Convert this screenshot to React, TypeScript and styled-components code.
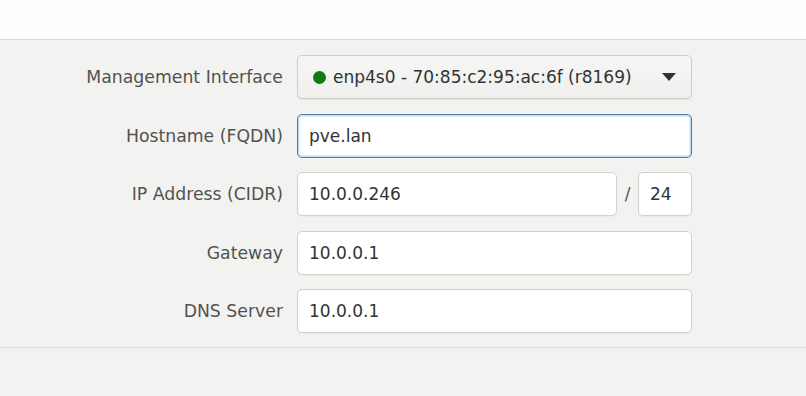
import React from "react";
import styled, { createGlobalStyle } from "styled-components";

const GlobalStyle = createGlobalStyle`
  html, body {
    margin: 0;
    padding: 0;
    background: #f2f2f0;
  }
  body {
    font-family: "DejaVu Sans", "Liberation Sans", sans-serif;
  }
`;

const Page = styled.div`
  width: 806px;
  height: 396px;
  display: flex;
  flex-direction: column;
  overflow: hidden;
  background: #f2f2f0;
`;

const TopBar = styled.div`
  height: 39px;
  flex-shrink: 0;
  background: #fdfdfc;
  border-bottom: 1px solid #dcdcd9;
`;

const Form = styled.div`
  display: grid;
  grid-template-columns: 283px 395px;
  column-gap: 14px;
  row-gap: 14.5px;
  align-items: center;
  padding: 15px 0 14px;
  border-bottom: 1px solid #dcdcd9;
`;

const Label = styled.label`
  justify-self: end;
  font-size: 17.3px;
  color: #525252;
  white-space: nowrap;
`;

const Field = styled.div<{ $focused?: boolean }>`
  height: 44px;
  box-sizing: border-box;
  display: flex;
  align-items: center;
  padding: 0 11px;
  background: #ffffff;
  border: 1px solid ${(p) => (p.$focused ? "#4a7cb3" : "#d3cfcb")};
  border-radius: 5px;
  box-shadow: ${(p) =>
    p.$focused ? "inset 0 0 0 1.5px #bfe0f6" : "0 1px 0 rgba(0,0,0,0.03)"};
  font-size: 17px;
  color: #2e3436;
`;

const Select = styled.div`
  height: 44px;
  box-sizing: border-box;
  display: flex;
  align-items: center;
  gap: 7px;
  padding: 0 14px 0 15px;
  background: linear-gradient(#f6f6f4, #efefed);
  border: 1px solid #d0ccc8;
  border-radius: 5px;
  box-shadow: 0 1px 1px rgba(0, 0, 0, 0.06);
  font-size: 17px;
  color: #2e3436;
`;

const Dot = styled.span`
  width: 13px;
  height: 13px;
  border-radius: 50%;
  background: #137a13;
  flex-shrink: 0;
`;

const SelectText = styled.span`
  flex: 1;
  white-space: nowrap;
`;

const Arrow = styled.span`
  width: 0;
  height: 0;
  border-left: 7px solid transparent;
  border-right: 7px solid transparent;
  border-top: 8px solid #2e3436;
  margin-right: 1px;
`;

const CidrRow = styled.div`
  display: flex;
  align-items: center;
`;

const Slash = styled.span`
  width: 21px;
  text-align: center;
  font-size: 17px;
  color: #555;
`;

const Wide = styled(Field)`
  flex: 1;
`;

const Prefix = styled(Field)`
  width: 54px;
  flex-shrink: 0;
`;

export default function App() {
  return (
    <Page>
      <GlobalStyle />
      <TopBar />
      <Form>
        <Label>Management Interface</Label>
        <Select>
          <Dot />
          <SelectText>enp4s0 - 70:85:c2:95:ac:6f (r8169)</SelectText>
          <Arrow />
        </Select>

        <Label>Hostname (FQDN)</Label>
        <Field $focused>pve.lan</Field>

        <Label>IP Address (CIDR)</Label>
        <CidrRow>
          <Wide>10.0.0.246</Wide>
          <Slash>/</Slash>
          <Prefix>24</Prefix>
        </CidrRow>

        <Label>Gateway</Label>
        <Field>10.0.0.1</Field>

        <Label>DNS Server</Label>
        <Field>10.0.0.1</Field>
      </Form>
    </Page>
  );
}
